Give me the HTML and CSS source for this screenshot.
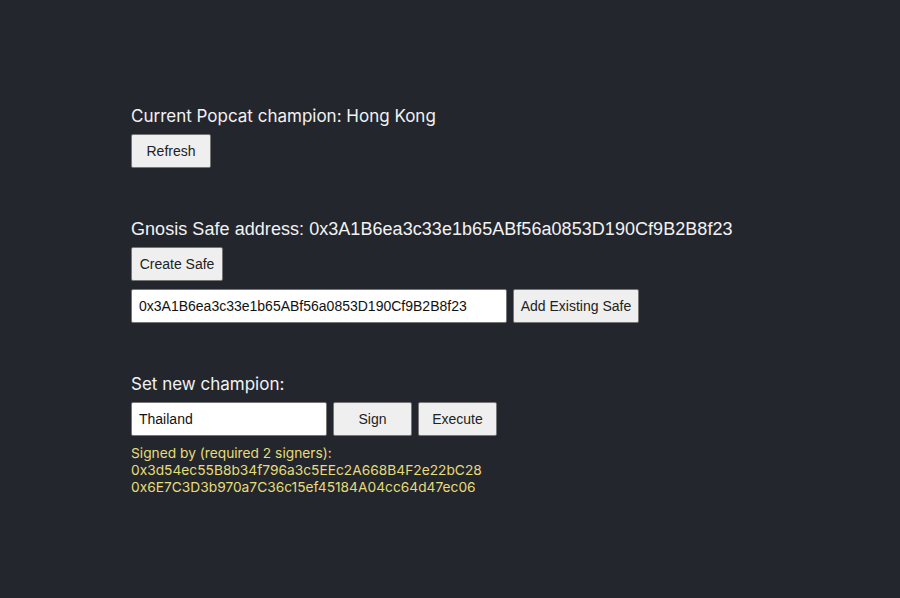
FILE: index.html
```html
<!DOCTYPE html>
<html>
<head>
<meta charset="utf-8">
<link rel="stylesheet" href="styles.css">
</head>
<body>
<main class="app">
  <section class="block">
    <div class="title">Current Popcat champion: Hong Kong</div>
    <div class="row"><button class="btn btn-refresh">Refresh</button></div>
  </section>
  <section class="block">
    <div class="title title-alt">Gnosis Safe address: 0x3A1B6ea3c33e1b65ABf56a0853D190Cf9B2B8f23</div>
    <div class="row"><button class="btn btn-create">Create Safe</button></div>
    <div class="row row-next">
      <input class="field field-wide" type="text" value="0x3A1B6ea3c33e1b65ABf56a0853D190Cf9B2B8f23">
      <button class="btn btn-add">Add Existing Safe</button>
    </div>
  </section>
  <section class="block">
    <div class="title">Set new champion:</div>
    <div class="row">
      <input class="field field-name" type="text" value="Thailand">
      <button class="btn btn-act">Sign</button>
      <button class="btn btn-act">Execute</button>
    </div>
    <div class="signers">
      <div>Signed by (required 2 signers):</div>
      <div>0x3d54ec55B8b34f796a3c5EEc2A668B4F2e22bC28</div>
      <div>0x6E7C3D3b970a7C36c15ef45184A04cc64d47ec06</div>
    </div>
  </section>
</main>
</body>
</html>
```

FILE: styles.css
```css
html, body {
  margin: 0;
  padding: 0;
  background: #24262e;
  height: 100%;
}
.app {
  padding: 105px 0 0 131px;
  display: flex;
  flex-direction: column;
  gap: 50px;
  font-family: Inter, "Noto Sans", sans-serif;
  color: #ffffff;
}
.block {
  display: flex;
  flex-direction: column;
  gap: 7px;
}
.title {
  font-size: 17px;
  line-height: 22px;
  color: #f2f2f2;
}
.title-alt {
  font-family: "Liberation Sans", Arial, sans-serif;
  font-size: 18px;
  letter-spacing: 0.05px;
}
.row {
  display: flex;
  gap: 6px;
  align-items: stretch;
}
.row-next {
  margin-top: 1px;
}
.btn {
  box-sizing: border-box;
  height: 34px;
  font-family: "Liberation Sans", Arial, sans-serif;
  font-size: 14px;
  color: #222;
  background: #efefef;
  border: 1px solid #767676;
  border-radius: 2px;
  padding: 0 6px;
  white-space: nowrap;
}
.btn-refresh { width: 80px; }
.btn-create { width: 92px; }
.btn-add { width: 126px; }
.btn-act { width: 79px; }
.field {
  box-sizing: border-box;
  height: 34px;
  font-family: "Liberation Sans", Arial, sans-serif;
  font-size: 14px;
  color: #111;
  background: #fff;
  border: 1px solid #767676;
  border-radius: 2px;
  padding: 0 7px;
}
.field-wide { width: 376px; }
.field-name { width: 196px; }
.signers {
  margin-top: 2px;
  font-size: 13.75px;
  line-height: 17px;
  color: #e6dc78;
}
```
